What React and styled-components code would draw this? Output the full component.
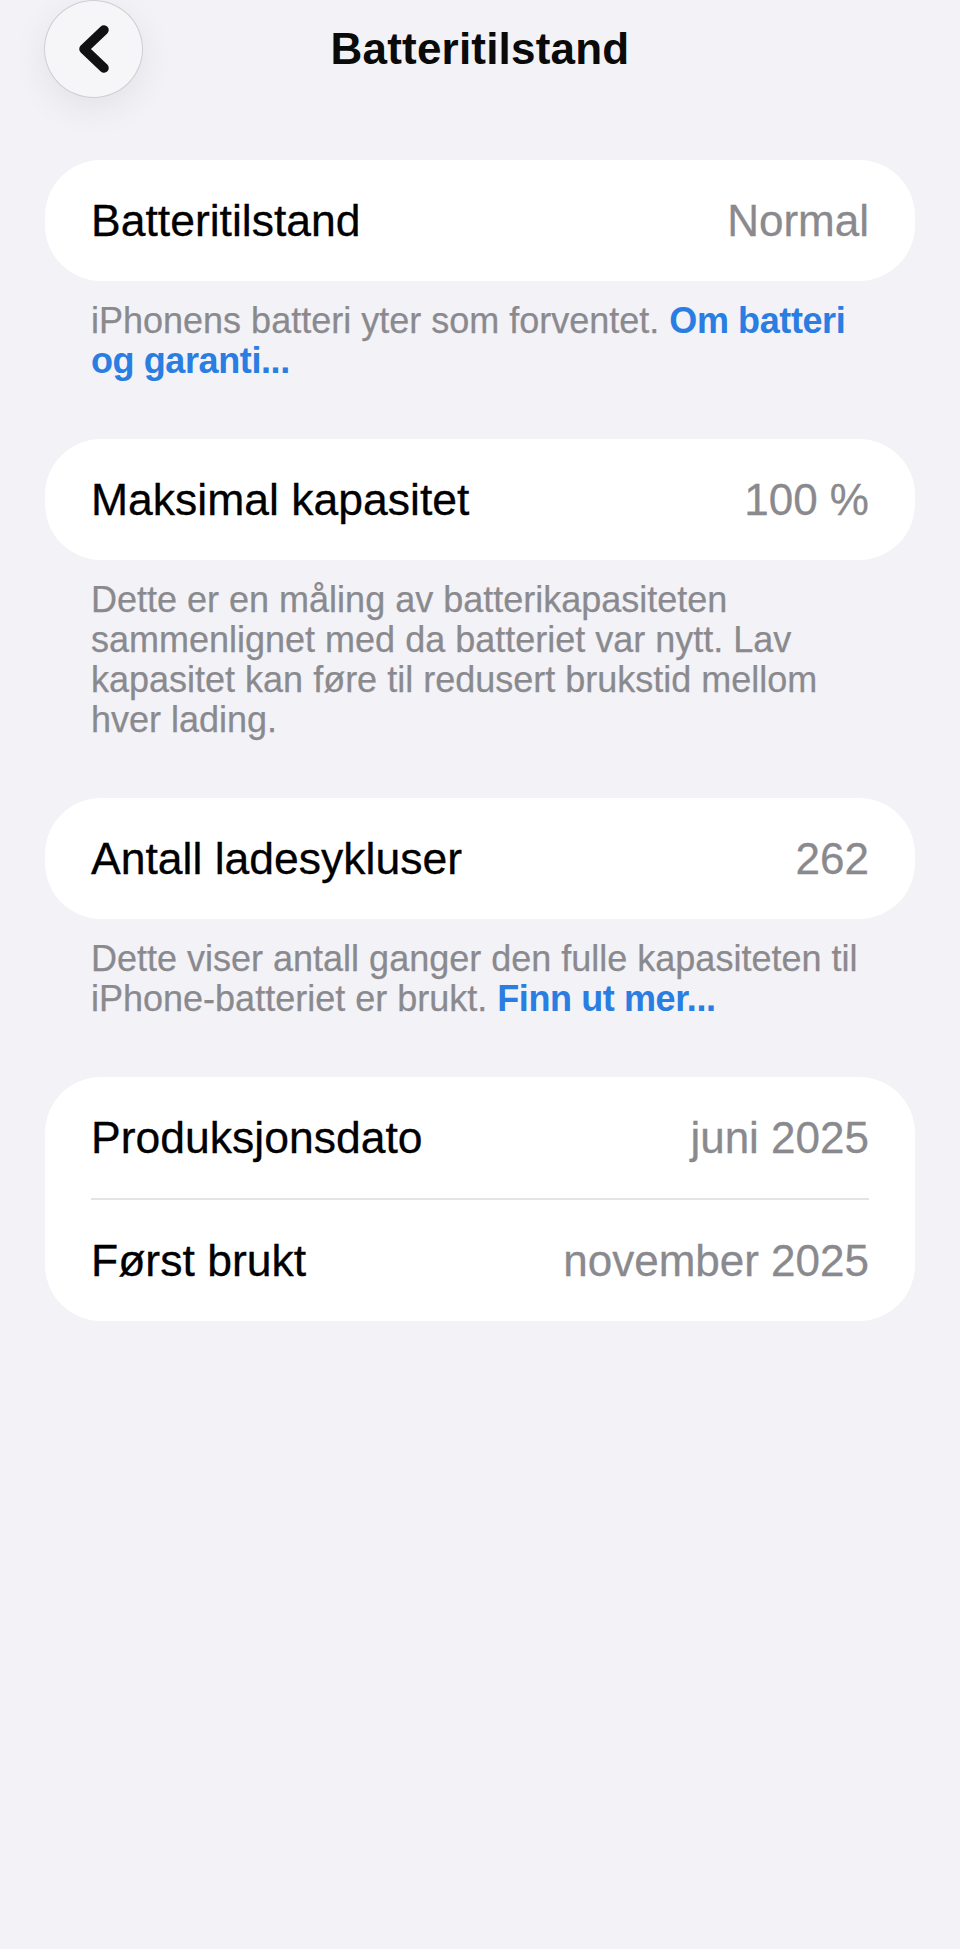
import React from "react";
import styled, { createGlobalStyle } from "styled-components";

const GlobalStyle = createGlobalStyle`
  html, body {
    margin: 0;
    padding: 0;
    background: #f2f2f7;
  }
  body {
    font-family: "Liberation Sans", Arial, sans-serif;
    -webkit-font-smoothing: antialiased;
  }
`;

const Page = styled.div`
  min-height: 1949px;
  background: #f2f2f7;
  display: flex;
  flex-direction: column;
`;

const Header = styled.header`
  display: grid;
  grid-template-columns: 1fr auto 1fr;
  align-items: center;
  height: 98px;
  padding: 0 44px;
`;

const BackButton = styled.button`
  width: 99px;
  height: 98px;
  border-radius: 50%;
  border: 1px solid #cfcfd4;
  background: #f6f6f8;
  box-shadow: 0 10px 36px rgba(0, 0, 0, 0.07);
  display: flex;
  align-items: center;
  justify-content: center;
  padding: 0;
  cursor: pointer;
  justify-self: start;
`;

const Title = styled.h1`
  margin: 0;
  font-size: 44px;
  font-weight: 700;
  color: #0a0a0a;
  letter-spacing: 0.2px;
`;

const Content = styled.main`
  display: flex;
  flex-direction: column;
  padding: 62px 45px 0;
`;

const Section = styled.section`
  display: flex;
  flex-direction: column;
  margin-bottom: 58px;
`;

const Card = styled.div`
  background: #ffffff;
  border-radius: 56px;
  display: flex;
  flex-direction: column;
`;

const Row = styled.div`
  display: flex;
  align-items: center;
  justify-content: space-between;
  height: 121px;
  padding: 0 46px;
`;

const Label = styled.span`
  font-size: 44.5px;
  color: #000000;
  -webkit-text-stroke: 0.3px #000000;
`;

const Value = styled.span`
  font-size: 44px;
  color: #8a8a8e;
  -webkit-text-stroke: 0.3px #8a8a8e;
`;

const Divider = styled.div`
  height: 2px;
  background: #e4e4e8;
  margin: 0 46px;
`;

const Footer = styled.p`
  margin: 20px 0 0;
  padding: 0 20px 0 46px;
  font-size: 36px;
  line-height: 40px;
  color: #8a8a8e;
  -webkit-text-stroke: 0.25px #8a8a8e;
`;

const Link = styled.a`
  color: #2a7de1;
  font-weight: 700;
  letter-spacing: -0.4px;
  text-decoration: none;
  -webkit-text-stroke: 0;
`;

const ChevronLeft = () => (
  <svg width="60" height="98" viewBox="0 0 60 98">
    <polyline
      points="40,30 20,49 40,68"
      fill="none"
      stroke="#111"
      strokeWidth="9.5"
      strokeLinecap="round"
      strokeLinejoin="round"
    />
  </svg>
);

const App = () => {
  return (
    <Page>
      <GlobalStyle />
      <Header>
        <BackButton aria-label="Tilbake">
          <ChevronLeft />
        </BackButton>
        <Title>Batteritilstand</Title>
        <div />
      </Header>

      <Content>
        <Section>
          <Card>
            <Row>
              <Label>Batteritilstand</Label>
              <Value>Normal</Value>
            </Row>
          </Card>
          <Footer>
            iPhonens batteri yter som forventet. <Link>Om batteri</Link>
            <br />
            <Link>og garanti...</Link>
          </Footer>
        </Section>

        <Section>
          <Card>
            <Row>
              <Label>Maksimal kapasitet</Label>
              <Value>100 %</Value>
            </Row>
          </Card>
          <Footer>
            Dette er en måling av batterikapasiteten
            <br />
            sammenlignet med da batteriet var nytt. Lav
            <br />
            kapasitet kan føre til redusert brukstid mellom
            <br />
            hver lading.
          </Footer>
        </Section>

        <Section>
          <Card>
            <Row>
              <Label>Antall ladesykluser</Label>
              <Value>262</Value>
            </Row>
          </Card>
          <Footer>
            Dette viser antall ganger den fulle kapasiteten til
            <br />
            iPhone-batteriet er brukt. <Link>Finn ut mer...</Link>
          </Footer>
        </Section>

        <Section>
          <Card>
            <Row>
              <Label>Produksjonsdato</Label>
              <Value>juni 2025</Value>
            </Row>
            <Divider />
            <Row>
              <Label>Først brukt</Label>
              <Value>november 2025</Value>
            </Row>
          </Card>
        </Section>
      </Content>
    </Page>
  );
};

export default App;
